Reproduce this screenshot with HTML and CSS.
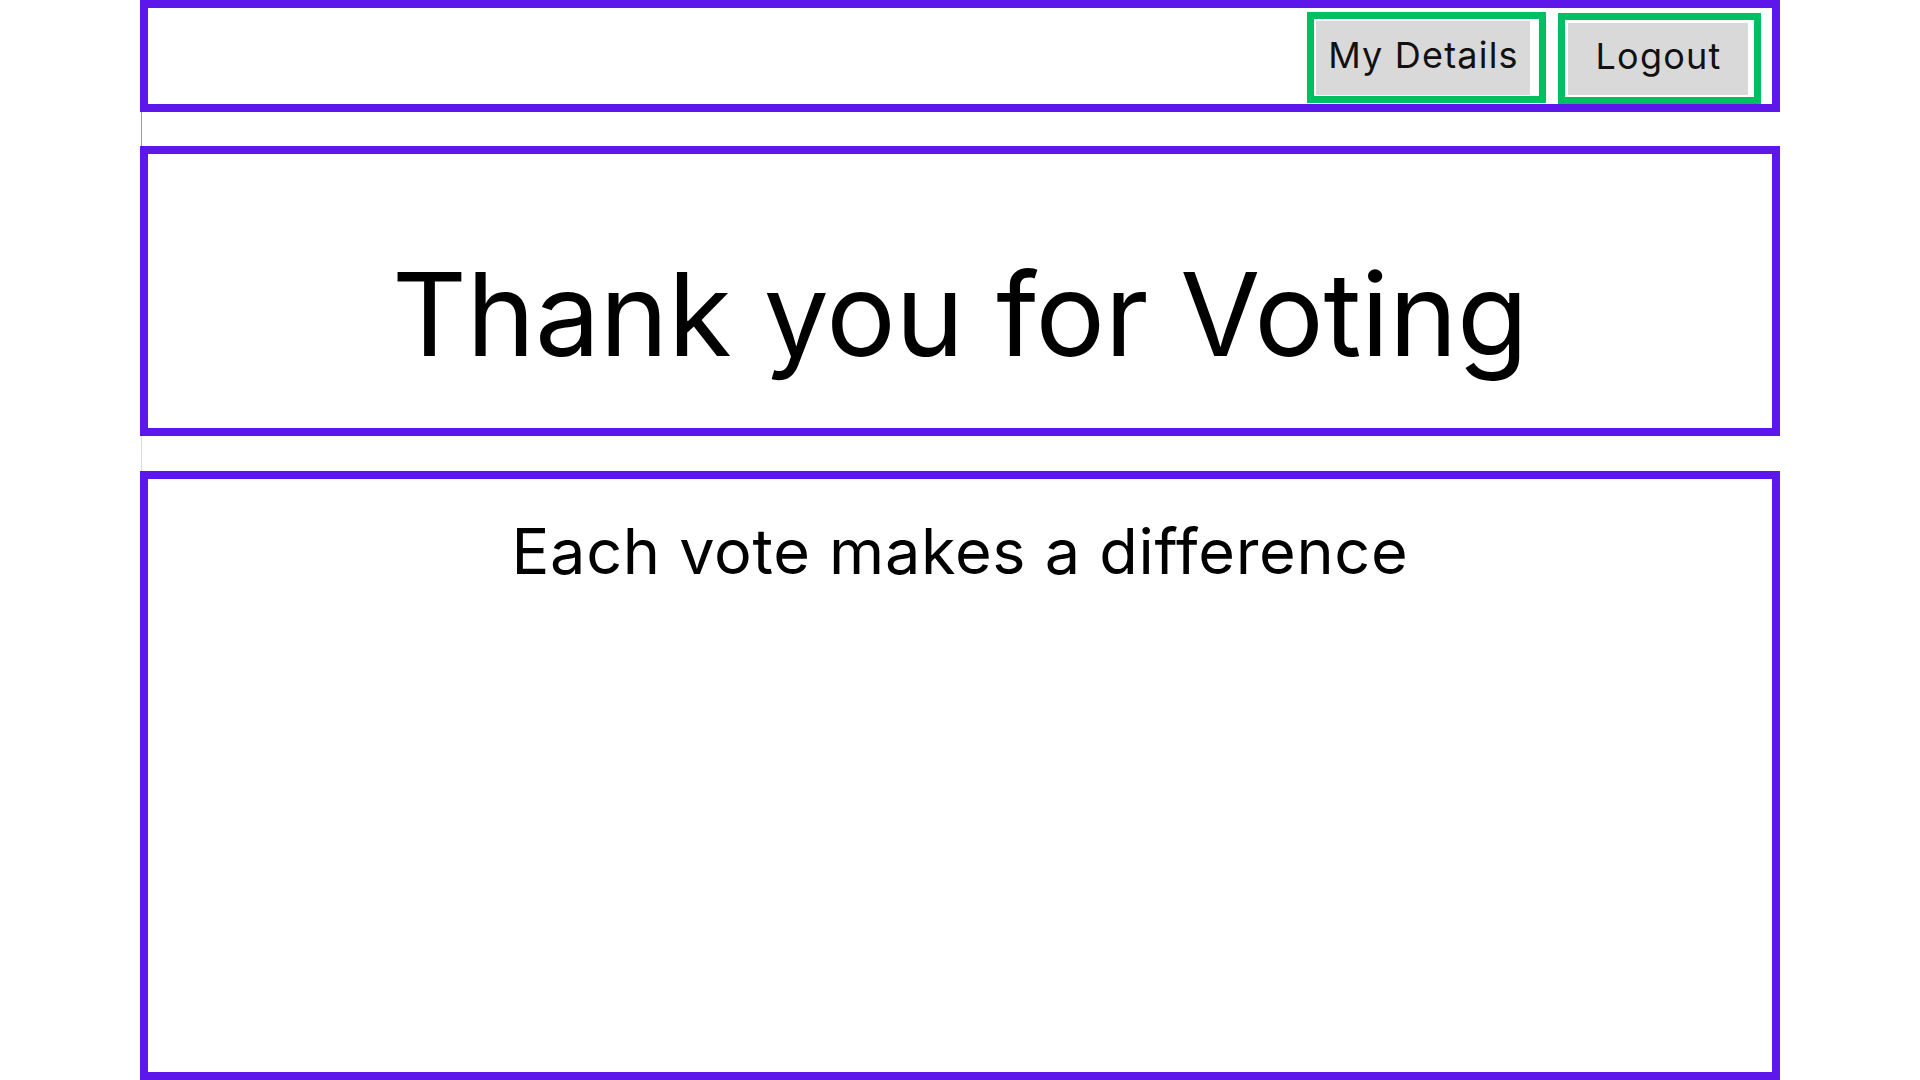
FILE: index.html
```html
<!DOCTYPE html>
<html lang="en">
<head>
<meta charset="utf-8">
<title>Thank you for Voting</title>
<link rel="stylesheet" href="styles.css">
</head>
<body>
<div class="page">
  <header class="topbar">
    <div class="btn-frame btn-frame-details"><button class="btn btn-details">My Details</button></div>
    <div class="btn-frame btn-frame-logout"><button class="btn btn-logout">Logout</button></div>
  </header>
  <div class="spacer spacer-dark"></div>
  <section class="panel panel-title">
    <h1 class="title">Thank you for Voting</h1>
  </section>
  <div class="spacer spacer-light"></div>
  <section class="panel panel-body">
    <p class="subtitle">Each vote makes a difference</p>
  </section>
</div>
</body>
</html>
```

FILE: styles.css
```css
* { box-sizing: border-box; }
html, body { margin: 0; padding: 0; background: #ffffff; }
body {
  font-family: Inter, "Noto Sans", "Liberation Sans", sans-serif;
  color: #000000;
  overflow: hidden;
}
.page {
  width: 1640px;
  margin: 0 auto;
  display: flex;
  flex-direction: column;
}
.topbar {
  height: 112px;
  border: 8px solid #5e17eb;
  display: flex;
  justify-content: flex-end;
  align-items: flex-start;
  gap: 12px;
  padding: 4px 11px 0 0;
}
.btn-frame {
  border: 7px solid #00bf63;
  background: #ffffff;
  display: flex;
}
.btn-frame-details { padding: 2px 9px 1px 2px; }
.btn-frame-logout { padding: 3px 6px 2px 3px; margin-top: 1px; }
.btn {
  font-family: Inter, "Noto Sans", "Liberation Sans", sans-serif;
  font-size: 36px;
  letter-spacing: 1.2px;
  color: #111111;
  background: #d9d9d9;
  border: none;
  margin: 0;
  padding: 0 0 6px 1px;
  display: flex;
  align-items: center;
  justify-content: center;
  height: 74px;
}
.btn-details { width: 214px; }
.btn-logout { width: 180px; height: 72px; }
.spacer {
  height: 34px;
  margin-left: 1px;
  border-left: 1px solid #9a9a9a;
}
.spacer-light { height: 35px; border-left-color: #dcdcdc; }
.panel {
  border: 8px solid #5e17eb;
}
.panel-title {
  height: 290px;
  padding-top: 90px;
}
.title {
  margin: 0;
  font-size: 116px;
  font-weight: 400;
  line-height: 140px;
  letter-spacing: -0.3px;
  text-align: center;
}
.panel-body {
  height: 609px;
  padding-top: 34px;
}
.subtitle {
  margin: 0;
  font-size: 63px;
  font-weight: 400;
  line-height: 76px;
  letter-spacing: 0.7px;
  text-align: center;
}
```
